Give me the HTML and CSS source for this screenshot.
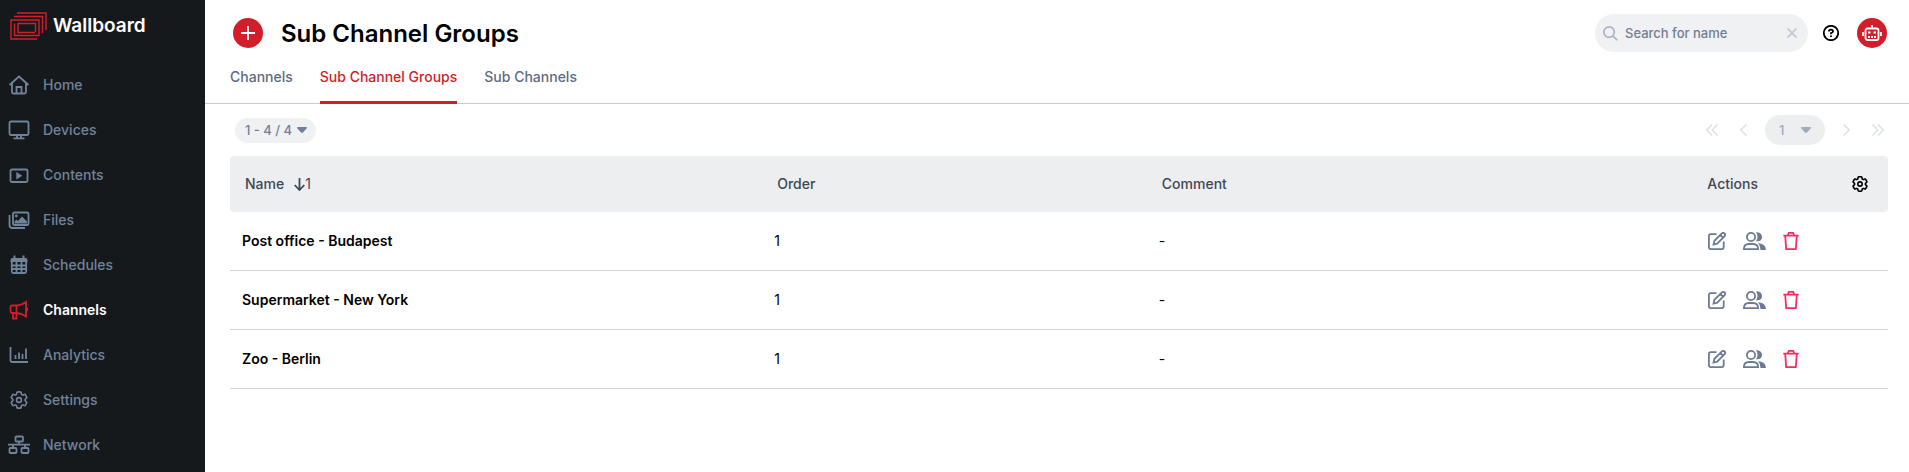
FILE: index.html
```html
<!DOCTYPE html>
<html lang="en">
<head>
    <meta charset="UTF-8">
    <meta name="viewport" content="width=device-width, initial-scale=1">
    <title>Wallboard - Sub Channel Groups</title>
    <link rel="stylesheet" href="styles.css">
</head>
<body>
    <!-- shared icons -->
    <svg class="sprite" aria-hidden="true">
        <symbol id="icon-gear" viewBox="2 2 20 20">
            <path d="M9.594 3.94c.09-.542.56-.94 1.110-.94h2.593c.55 0 1.020.398 1.110.94l.213 1.281c.063.374.313.686.645.87.074.04.147.083.22.127.325.196.72.257 1.075.124l1.217-.456a1.125 1.125 0 0 1 1.370.49l1.296 2.247a1.125 1.125 0 0 1-.26 1.431l-1.003.827c-.293.241-.438.613-.43.992a7.723 7.723 0 0 1 0 .255c-.008.378.137.75.43.991l1.004.827c.424.35.534.955.26 1.430l-1.298 2.247a1.125 1.125 0 0 1-1.369.491l-1.217-.456c-.355-.133-.75-.072-1.076.124a6.470 6.470 0 0 1-.22.128c-.331.183-.581.495-.644.869l-.213 1.281c-.09.543-.56.94-1.110.94h-2.594c-.55 0-1.019-.398-1.110-.94l-.213-1.281c-.062-.374-.312-.686-.644-.87a6.520 6.520 0 0 1-.22-.127c-.325-.196-.72-.257-1.076-.124l-1.217.456a1.125 1.125 0 0 1-1.369-.49l-1.297-2.247a1.125 1.125 0 0 1 .26-1.431l1.004-.827c.292-.24.437-.613.43-.991a6.932 6.932 0 0 1 0-.255c.007-.38-.138-.751-.43-.992l-1.004-.827a1.125 1.125 0 0 1-.26-1.430l1.297-2.247a1.125 1.125 0 0 1 1.370-.491l1.216.456c.356.133.751.072 1.076-.124.072-.044.146-.086.22-.128.332-.183.582-.495.644-.869z"/>
            <circle cx="12" cy="12" r="2.700"/>
        </symbol>
        <symbol id="icon-edit" viewBox="0 0 18 18">
            <path d="M8.500 2.200H2.800Q.9 2.200.9 4.100v11q0 2 1.900 2h11q1.900 0 1.900-2V9.500"/>
            <path d="M5.500 12.600l.9-3.800 7.500-7.400q1.300-1.100 2.600.1t.1 2.600l-7.400 7.500zM12.300 3l2.700 2.700"/>
        </symbol>
        <symbol id="icon-users" viewBox="0 0 23 18">
            <circle cx="8" cy="5" r="4.100"/>
            <path d="M.9 17.100q0-5.100 5.100-5.100h4q5.100 0 5.100 5.100z"/>
            <path class="solid" d="M13 .3q6 0 6 4.700t-6 4.200q3-4.200 0-8.900zM15 11.200q7.500 0 8 6.800h-5.500q0-4.500-2.500-6.800z"/>
        </symbol>
        <symbol id="icon-trash" viewBox="0 0 16 18">
            <path d="M.3 3.700h15.400M2.200 3.700l1 13.500h9.600l1-13.500M4.700 3.500L5.800.9h4.400l1.100 2.600"/>
        </symbol>
        <symbol id="icon-caret" viewBox="0 0 10 6">
            <path d="M.8 0h8.400q1.200.5.4 1.500L6 5.500q-1 .9-2 0L.4 1.500Q-.4.500.8 0z"/>
        </symbol>
    </svg>

    <div class="app">
        <aside class="sidebar">
            <a class="logo" href="#">
                <svg class="logo-mark" viewBox="0 0 37 28">
                    <path d="M7 1h29v17M4 4.500h28.500V21M27 27H1V8h28v15.500H4.500v-12M25 20.500H8V11.500h17.500V20"/>
                </svg>
                <span>Wallboard</span>
            </a>
            <nav class="menu">
                <a href="#">
                    <svg viewBox="0 0 22 22"><path d="M1.500 11L11 2.500l9.500 8.500M4 9v9q0 1.500 1.500 1.500h11q1.500 0 1.500-1.500V9M8.500 19.500V13h5v6.500"/></svg>
                    Home
                </a>
                <a href="#">
                    <svg viewBox="0 0 22 22"><rect x="1.500" y="2.500" width="19" height="13.500" rx="1.500"/><path d="M9 16v3M13 16v3M5.500 19.300h11"/></svg>
                    Devices
                </a>
                <a href="#">
                    <svg viewBox="0 0 22 22"><rect x="2.500" y="5.500" width="17" height="12.500" rx="1.500"/><path class="solid" d="M8.300 8v7.500l6-3.700z"/></svg>
                    Contents
                </a>
                <a href="#">
                    <svg viewBox="0 0 22 22"><rect x="5" y="3.500" width="15.500" height="12.500" rx="1.500"/><path d="M1.500 6v10q0 3 3 3H17"/><circle class="solid" cx="8.300" cy="7" r="1.400"/><path class="solid" d="M6.500 14.500v-2l2-2 1.500 1.500 4-4.500 5 5v2z"/></svg>
                    Files
                </a>
                <a href="#">
                    <svg viewBox="0 0 22 22"><path class="solid" d="M5.500 1.500h2V4h7V1.500h2V4h1q2 0 2 2v2h-17V6q0-2 2-2h1z"/><path d="M3.800 7v10.500q0 1.500 1.500 1.500h11.400q1.500 0 1.500-1.500V7M4 11.500h14M4 15h14M8.500 8v11M13.500 8v11"/></svg>
                    Schedules
                </a>
                <a class="active" href="#">
                    <svg viewBox="0 0 22 22"><path d="M9 6.500H4Q2.500 6.500 2.500 8v4.500Q2.500 14 4 14h5M8.500 6.500V14M9 6.500q5-.5 9-3.500v14.500q-4-3-9-3.500M5 14v5.500h3.500V14M18.500 8.500q1.500 1.700 0 3.500"/></svg>
                    Channels
                </a>
                <a href="#">
                    <svg viewBox="0 0 22 22"><path d="M2.500 3v13.500q0 1.500 1.500 1.500h16M7.500 11v4M11 8.500V15M14.500 10v5M18 4.500V15"/></svg>
                    Analytics
                </a>
                <a href="#">
                    <svg class="gear" viewBox="0 0 24 24"><use href="#icon-gear"/></svg>
                    Settings
                </a>
                <a href="#">
                    <svg viewBox="0 0 22 22"><rect x="7.500" y="2.500" width="7.500" height="5" rx="1"/><rect x="1.500" y="14" width="7" height="5" rx="1"/><rect x="13.500" y="14" width="7" height="5" rx="1"/><path d="M0 10.700h22M11 7.500v3M5 11v3M17 11v3"/></svg>
                    Network
                </a>
            </nav>
        </aside>

        <main class="main">
            <header class="header">
                <div class="title-bar">
                    <button class="round-button" type="button" aria-label="Add sub channel group">
                        <svg class="plus" viewBox="0 0 14 14"><path d="M7 0v14M0 7h14"/></svg>
                    </button>
                    <h1>Sub Channel Groups</h1>
                    <div class="search">
                        <label for="search">
                            <svg class="search-icon" viewBox="0 0 16 16"><circle cx="6.500" cy="6.500" r="5.600"/><path d="M10.500 10.500l4.700 4.700"/></svg>
                        </label>
                        <input id="search" type="text" placeholder="Search for name" aria-label="Search for name">
                        <button class="icon-button clear" type="button" aria-label="Clear search">
                            <svg viewBox="0 0 10 10"><path d="M.5.500l9 9M9.500.500l-9 9"/></svg>
                        </button>
                    </div>
                    <button class="icon-button help" type="button" aria-label="Help">
                        <svg viewBox="0 0 16 16"><circle cx="8" cy="8" r="7.200"/><path d="M6 6.500Q6 4.700 8 4.700t2 1.700Q10 7.500 8 8v1.200M8 10.500v1.600"/></svg>
                    </button>
                    <button class="round-button" type="button" aria-label="Account">
                        <svg class="robot" viewBox="0 0 20 16"><path d="M10 0v3M1 7v4M19 7v4"/><rect x="3.500" y="3.500" width="13" height="11.500" rx="2"/><path d="M6 7.500h2.500M11.500 7.500H14M6 12h2M9 12h2M12 12h2"/></svg>
                    </button>
                </div>
                <nav class="tabs">
                    <a href="#">Channels</a>
                    <a class="active" href="#">Sub Channel Groups</a>
                    <a href="#">Sub Channels</a>
                </nav>
            </header>

            <section class="content">
                <div class="toolbar">
                    <div class="dropdown range">
                        <select aria-label="Rows shown"><option>1 - 4 / 4</option></select>
                        <svg viewBox="0 0 10 6"><use href="#icon-caret"/></svg>
                    </div>
                    <div class="pager">
                        <button class="icon-button" type="button" aria-label="First page" disabled><svg class="double" viewBox="0 0 12 12"><path d="M6 .5L.8 6 6 11.500M11.500.500L6.300 6l5.200 5.500"/></svg></button>
                        <button class="icon-button" type="button" aria-label="Previous page" disabled><svg class="single" viewBox="0 0 7 12"><path d="M6.500.500L.8 6l5.700 5.500"/></svg></button>
                        <div class="dropdown page">
                            <select aria-label="Page"><option>1</option></select>
                            <svg viewBox="0 0 10 6"><use href="#icon-caret"/></svg>
                        </div>
                        <button class="icon-button" type="button" aria-label="Next page" disabled><svg class="single" viewBox="0 0 7 12"><path d="M.5.500L6.200 6 .5 11.500"/></svg></button>
                        <button class="icon-button" type="button" aria-label="Last page" disabled><svg class="double" viewBox="0 0 12 12"><path d="M.5.500L5.700 6 .5 11.500M6 .5L11.200 6 6 11.500"/></svg></button>
                    </div>
                </div>

                <table class="groups">
                    <thead>
                        <tr>
                            <th class="col-name">
                                <div class="sort">Name <span><svg viewBox="0 0 11 13"><path d="M5.500 0v12M.7 7l4.800 5 4.800-5"/></svg>1</span></div>
                            </th>
                            <th class="col-order">Order</th>
                            <th class="col-comment">Comment</th>
                            <th class="col-actions">Actions</th>
                            <th class="col-config"><button class="icon-button" type="button" aria-label="Table settings"><svg class="gear" viewBox="0 0 24 24"><use href="#icon-gear"/></svg></button></th>
                        </tr>
                    </thead>
                    <tbody>
                        <tr>
                            <td class="name">Post office - Budapest</td>
                            <td>1</td>
                            <td>-</td>
                            <td colspan="2">
                                <div class="actions">
                                    <button class="icon-button" type="button" aria-label="Edit"><svg class="edit" viewBox="0 0 18 18"><use href="#icon-edit"/></svg></button>
                                    <button class="icon-button" type="button" aria-label="Users"><svg class="users" viewBox="0 0 23 18"><use href="#icon-users"/></svg></button>
                                    <button class="icon-button" type="button" aria-label="Delete"><svg class="trash" viewBox="0 0 16 18"><use href="#icon-trash"/></svg></button>
                                </div>
                            </td>
                        </tr>
                        <tr>
                            <td class="name">Supermarket - New York</td>
                            <td>1</td>
                            <td>-</td>
                            <td colspan="2">
                                <div class="actions">
                                    <button class="icon-button" type="button" aria-label="Edit"><svg class="edit" viewBox="0 0 18 18"><use href="#icon-edit"/></svg></button>
                                    <button class="icon-button" type="button" aria-label="Users"><svg class="users" viewBox="0 0 23 18"><use href="#icon-users"/></svg></button>
                                    <button class="icon-button" type="button" aria-label="Delete"><svg class="trash" viewBox="0 0 16 18"><use href="#icon-trash"/></svg></button>
                                </div>
                            </td>
                        </tr>
                        <tr>
                            <td class="name">Zoo - Berlin</td>
                            <td>1</td>
                            <td>-</td>
                            <td colspan="2">
                                <div class="actions">
                                    <button class="icon-button" type="button" aria-label="Edit"><svg class="edit" viewBox="0 0 18 18"><use href="#icon-edit"/></svg></button>
                                    <button class="icon-button" type="button" aria-label="Users"><svg class="users" viewBox="0 0 23 18"><use href="#icon-users"/></svg></button>
                                    <button class="icon-button" type="button" aria-label="Delete"><svg class="trash" viewBox="0 0 16 18"><use href="#icon-trash"/></svg></button>
                                </div>
                            </td>
                        </tr>
                    </tbody>
                </table>
            </section>
        </main>
    </div>
</body>
</html>
```
FILE: styles.css
```css
* {
    box-sizing: border-box;
}

body {
    margin: 0;
    font-family: Inter, "Liberation Sans", sans-serif;
    font-size: 14px;
    line-height: 20px;
    font-weight: 500;
    color: #000;
    background: #fff;
}

a {
    color: inherit;
    text-decoration: none;
}

button, input, select {
    font: inherit;
    color: inherit;
    border: none;
    background: none;
    margin: 0;
    padding: 0;
    outline: none;
}

button {
    cursor: pointer;
}

svg {
    display: block;
    flex: none;
    fill: none;
    stroke: currentColor;
    stroke-width: 1.8;
}

.solid {
    fill: currentColor;
    stroke: none;
}

.sprite {
    position: absolute;
    width: 0;
    height: 0;
}

.app {
    display: flex;
    min-height: 100vh;
}

/* Sidebar */
.sidebar {
    flex: none;
    width: 205px;
    background: #15191c;
    color: #71839b;
}

.logo {
    display: flex;
    align-items: center;
    gap: 6px;
    height: 52px;
    padding-left: 10px;
    color: #fff;
    font-size: 19px;
    font-weight: 600;
}

.logo-mark {
    width: 37px;
    height: 28px;
    color: #d21e2b;
    stroke-width: 1.4;
}

.menu {
    padding-top: 10px;
}

.menu a {
    display: flex;
    align-items: center;
    gap: 13px;
    height: 45px;
    padding-left: 8px;
}

.menu svg {
    width: 22px;
    height: 22px;
}

.menu .gear {
    padding: 2px;
}

.menu .active {
    color: #fff;
    font-weight: 600;
}

.menu .active svg {
    color: #d21e2b;
}

/* Header */
.main {
    flex: 1;
    min-width: 0;
}

.header {
    border-bottom: 1px solid #c9cad6;
}

.title-bar {
    display: flex;
    align-items: center;
    height: 66px;
    padding: 0 22px 0 28px;
}

.title-bar h1 {
    flex: 1;
    margin: 0 0 0 18px;
    padding-top: 2px;
    font-size: 24px;
    line-height: 32px;
    font-weight: 600;
}

.round-button {
    display: flex;
    align-items: center;
    justify-content: center;
    width: 30px;
    height: 30px;
    border-radius: 50%;
    background: #d21e2b;
    color: #fff;
}

.plus {
    width: 14px;
    height: 14px;
}

.robot {
    width: 20px;
    height: 16px;
}

.icon-button {
    display: flex;
    align-items: center;
    justify-content: center;
}

.search {
    display: flex;
    align-items: center;
    gap: 7px;
    width: 213px;
    height: 38px;
    padding: 0 11px 0 8px;
    border-radius: 19px;
    background: #f0f1f3;
    color: #717f96;
}

.search-icon {
    width: 15px;
    height: 15px;
    color: #a9b4c4;
}

.search input {
    flex: 1;
    min-width: 0;
    font-size: 13px;
}

.search input::placeholder {
    color: #717f96;
    opacity: 1;
}

.clear svg {
    width: 10px;
    height: 10px;
    color: #c3cad4;
}

.help {
    margin: 0 18px 0 15px;
}

.help svg {
    width: 16px;
    height: 16px;
}

.tabs {
    display: flex;
    gap: 27px;
    padding: 0 25px;
    margin-bottom: -1px;
    color: #5d6b81;
}

.tabs a {
    height: 38px;
    padding-top: 1px;
    border-bottom: 3px solid transparent;
}

.tabs .active {
    color: #d21e2b;
    border-bottom-color: #d21e2b;
}

/* Toolbar above the table */
.content {
    padding: 11px 21px 11px 25px;
}

.toolbar {
    display: flex;
    align-items: center;
    justify-content: space-between;
    padding: 0 4px 0 5px;
    margin-bottom: 11px;
}

.dropdown {
    display: grid;
    align-items: center;
    background: #f0f1f3;
    color: #71819a;
}

.dropdown select {
    grid-area: 1 / 1;
    width: 100%;
    height: 100%;
    appearance: none;
    font-size: 13px;
    cursor: pointer;
}

.dropdown svg {
    grid-area: 1 / 1;
    justify-self: end;
    width: 10px;
    height: 6px;
    margin-right: 9px;
    fill: currentColor;
    stroke: none;
    pointer-events: none;
}

.range {
    width: 81px;
    height: 25px;
    border-radius: 13px;
}

.range select {
    padding-left: 10px;
}

.pager {
    display: flex;
    align-items: center;
    gap: 18px;
    color: #dcdfe4;
}

.page {
    width: 60px;
    height: 30px;
    border-radius: 15px;
    background: #eceef0;
    color: #a0abba;
}

.page select {
    padding-left: 14px;
}

.page svg {
    margin-right: 14px;
}

.pager .icon-button svg {
    stroke-width: 1.4;
}

.pager .single {
    width: 7px;
    height: 12px;
}

.pager .double {
    width: 12px;
    height: 12px;
}

.pager .icon-button:first-child {
    margin-right: 4px;
}

.pager .icon-button:last-child {
    margin-left: 4px;
}

/* Table */
.groups {
    width: 100%;
    table-layout: fixed;
    border-spacing: 0;
}

.groups th {
    height: 56px;
    padding: 0 15px;
    background: #edeef0;
    color: #3f4757;
    font-weight: 500;
    text-align: left;
}

.groups th:first-child {
    border-radius: 4px 0 0 4px;
}

.groups th:last-child {
    border-radius: 0 4px 4px 0;
}

.col-name {
    width: 32.1%;
}

.col-order {
    width: 23.2%;
}

.col-comment {
    width: 32.9%;
}

.col-config {
    width: 56px;
}

.col-config .icon-button {
    margin-left: 5px;
    color: #000;
}

.col-config svg {
    width: 16px;
    height: 16px;
    stroke-width: 2;
}

.sort {
    display: flex;
    gap: 10px;
}

.sort span {
    display: flex;
    align-items: center;
    font-weight: 400;
}

.sort svg {
    width: 11px;
    height: 13px;
}

.groups td {
    height: 59px;
    padding: 0 12px;
    border-bottom: 1px solid #d3d4de;
    font-weight: 400;
}

.groups .name {
    font-weight: 600;
}

.actions {
    display: flex;
    align-items: center;
    gap: 17px;
    padding-left: 4px;
    color: #6c7b93;
}

.edit {
    width: 18px;
    height: 18px;
}

.users {
    width: 23px;
    height: 18px;
}

.trash {
    width: 16px;
    height: 18px;
    color: #fb2b61;
}
```
